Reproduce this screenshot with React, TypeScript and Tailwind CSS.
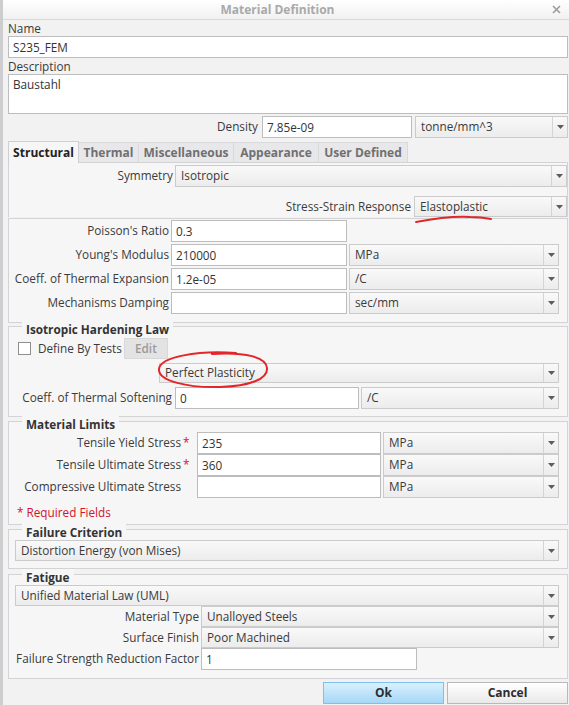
import type { ReactNode } from "react";

// combo box: grey gradient face with a separate arrow cell
function Combo({ value = "", className = "" }: { value?: string; className?: string }) {
    return (
        <div className={`flex h-full border border-[#cbcbcb] bg-linear-to-b from-[#f9f9f9] to-[#ececec] ${className}`}>
            <div className="flex-1 truncate pl-[5px] self-center text-[#3a3a3a]">{value}</div>
            <div className="flex w-[15px] items-center justify-center border-l border-[#d4d4d4]">
                <svg width="7" height="4" viewBox="0 0 7 4">
                    <path d="M0 0h7L3.5 4z" fill="#5c5c5c" />
                </svg>
            </div>
        </div>
    );
}

function Field({ value = "", className = "" }: { value?: string; className?: string }) {
    return (
        <input
            readOnly
            defaultValue={value}
            className={`h-full border border-[#bdbdbd] bg-white pl-[4px] text-[#333] outline-none ${className}`}
        />
    );
}

function Group({ title, className = "", children }: { title?: string; className?: string; children: ReactNode }) {
    return (
        <div className={`border border-[#d3d3d5] bg-[#f6f6f7] ${className}`}>
            {title && (
                <div className="-mt-[5px] h-[14px] pl-[13px] leading-[14px]">
                    <span className="bg-[#f6f6f7] px-[4px] font-bold text-[#333]">{title}</span>
                </div>
            )}
            {children}
        </div>
    );
}

const tabs = [
    { name: "Thermal", w: "w-[60px]" },
    { name: "Miscellaneous", w: "w-[95px]" },
    { name: "Appearance", w: "w-[85px]" },
    { name: "User Defined", w: "w-[89px]" },
];

const limits = [
    { label: "Tensile Yield Stress", value: "235", req: true },
    { label: "Tensile Ultimate Stress", value: "360", req: true },
    { label: "Compressive Ultimate Stress", value: "", req: false },
];

export default function App() {
    return (
        <div className="relative flex h-[705px] w-[569px] flex-col overflow-hidden border-l-[3px] border-[#cdcdd0] bg-[#f2f2f3] font-['Open_Sans',sans-serif] text-[11.75px] text-[#3b3b3b]">
            {/* title bar */}
            <div className="flex h-[20px] shrink-0 items-center border-b border-[#dadada] bg-linear-to-b from-white to-[#f1f1f1]">
                <span className="flex-1 text-center text-[12px] font-bold text-[#a9a9a9]">Material Definition</span>
                <svg width="9" height="9" viewBox="0 0 9 9" className="mr-[8px]">
                    <path d="M1 1l7 7M8 1L1 8" stroke="#9c9c9c" strokeWidth="1.6" />
                </svg>
            </div>

            <div className="flex flex-1 flex-col pl-[5px] pr-[1px]">
                <div className="h-[16px] leading-[16px]">Name</div>
                <div className="h-[22px]">
                    <Field value="S235_FEM" className="w-full" />
                </div>
                <div className="h-[16px] leading-[16px]">Description</div>
                <textarea
                    readOnly
                    defaultValue="Baustahl"
                    className="h-[40px] resize-none border border-[#bdbdbd] bg-white px-[4px] pt-[1px] leading-[16px] text-[#333] outline-none"
                />

                <div className="mt-[2px] flex h-[22px] items-center justify-end">
                    <span className="mr-[4px]">Density</span>
                    <Field value="7.85e-09" className="w-[150px]" />
                    <Combo value="tonne/mm^3" className="ml-[3px] w-[153px]" />
                </div>

                {/* tab strip */}
                <div className="mt-[3px] flex h-[22px] items-end border-b border-[#d3d3d5]">
                    <div className="-mb-px flex h-[22px] w-[71px] items-center justify-center border border-b-0 border-[#cfcfd1] bg-[#f6f6f7] text-[12px] font-bold text-[#222]">
                        Structural
                    </div>
                    {tabs.map((t) => (
                        <div
                            key={t.name}
                            className={`flex h-[20px] ${t.w} items-center justify-center border-t border-r border-[#dadadc] bg-[#e8e8ea] text-[12px] font-bold text-[#707070]`}
                        >
                            {t.name}
                        </div>
                    ))}
                </div>

                <div className="border-x border-[#d3d3d5] bg-[#f6f6f7] pt-[2px]">
                    <div className="flex h-[22px] items-center">
                        <div className="w-[164px] text-right">Symmetry</div>
                        <Combo value="Isotropic" className="ml-[2px] flex-1" />
                    </div>
                    <div className="mt-[9px] flex h-[21px] items-center justify-end">
                        <span className="mr-[3px]">Stress-Strain Response</span>
                        <Combo value="Elastoplastic" className="w-[153px]" />
                    </div>
                </div>

                <Group className="mt-[1px] flex flex-col gap-[2px] pt-[1px] pb-[8px]">
                    <div className="flex h-[22px] items-center pr-[8px]">
                        <div className="w-[160px] text-right">Poisson's Ratio</div>
                        <Field value="0.3" className="ml-[2px] w-[176px]" />
                    </div>
                    <div className="flex h-[22px] items-center pr-[8px]">
                        <div className="w-[160px] text-right">Young's Modulus</div>
                        <Field value="210000" className="ml-[2px] w-[176px]" />
                        <Combo value="MPa" className="ml-[2px] flex-1" />
                    </div>
                    <div className="flex h-[22px] items-center pr-[8px]">
                        <div className="w-[160px] text-right">Coeff. of Thermal Expansion</div>
                        <Field value="1.2e-05" className="ml-[2px] w-[176px]" />
                        <Combo value="/C" className="ml-[2px] flex-1" />
                    </div>
                    <div className="flex h-[22px] items-center pr-[8px]">
                        <div className="w-[160px] text-right">Mechanisms Damping</div>
                        <Field className="ml-[2px] w-[176px]" />
                        <Combo value="sec/mm" className="ml-[2px] flex-1" />
                    </div>
                </Group>

                <Group title="Isotropic Hardening Law" className="mt-[3px] pb-[7px]">
                    <div className="mt-[2px] flex h-[21px] items-center pl-[9px]">
                        <div className="h-[13px] w-[13px] border border-[#8e8e8e] bg-white" />
                        <span className="ml-[7px]">Define By Tests</span>
                        <div className="ml-[2px] flex h-[21px] w-[44px] items-center justify-center border border-[#d8d8d8] bg-[#e3e3e4] font-semibold text-[#9a9a9a]">
                            Edit
                        </div>
                    </div>
                    <div className="mt-[4px] h-[20px] pl-[150px] pr-[8px]">
                        <Combo value="Perfect Plasticity" />
                    </div>
                    <div className="mt-[4px] flex h-[22px] items-center pr-[8px]">
                        <div className="w-[163px] text-right">Coeff. of Thermal Softening</div>
                        <Field value="0" className="ml-[3px] w-[184px]" />
                        <Combo value="/C" className="ml-[2px] flex-1" />
                    </div>
                </Group>

                <Group title="Material Limits" className="mt-[4px] pb-[5px]">
                    <div className="mt-[1px] flex flex-col">
                        {limits.map((l) => (
                            <div key={l.label} className="flex h-[22px] items-center pr-[8px]">
                                <div className="w-[172px] text-right">{l.label}</div>
                                <div className="w-[14px] pl-[2px] text-[#d4122c]">{l.req ? "*" : ""}</div>
                                <Field value={l.value} className="ml-[2px] w-[184px]" />
                                <Combo value="MPa" className="ml-[2px] flex-1" />
                            </div>
                        ))}
                    </div>
                    <div className="mt-[7px] h-[14px] pl-[8px] leading-[14px] text-[#d4122c]">* Required Fields</div>
                </Group>

                <Group title="Failure Criterion" className="mt-[4px] pb-[7px]">
                    <div className="mt-[1px] h-[21px] pl-[6px] pr-[8px]">
                        <Combo value="Distortion Energy (von Mises)" />
                    </div>
                </Group>

                <Group title="Fatigue" className="mt-[5px] pb-[8px]">
                    <div className="mt-[1px] h-[21px] pl-[6px] pr-[8px]">
                        <Combo value="Unified Material Law (UML)" />
                    </div>
                    <div className="flex h-[21px] items-center pr-[8px]">
                        <div className="w-[190px] text-right">Material Type</div>
                        <Combo value="Unalloyed Steels" className="ml-[2px] flex-1" />
                    </div>
                    <div className="flex h-[21px] items-center pr-[8px]">
                        <div className="w-[190px] text-right">Surface Finish</div>
                        <Combo value="Poor Machined" className="ml-[2px] flex-1" />
                    </div>
                    <div className="flex h-[22px] items-center">
                        <div className="w-[190px] text-right">Failure Strength Reduction Factor</div>
                        <Field value="1" className="ml-[2px] w-[216px]" />
                    </div>
                </Group>

                <div className="mt-[3px] flex h-[22px] justify-end gap-[3px]">
                    <button className="w-[121px] border border-[#80bfe9] bg-linear-to-b from-[#d9f0fd] to-[#a5d7f6] text-[12px] font-bold text-[#2c2c2c]">
                        Ok
                    </button>
                    <button className="w-[121px] border border-[#b8b8b8] bg-linear-to-b from-white to-[#e9e9e9] text-[12px] font-bold text-[#2c2c2c]">
                        Cancel
                    </button>
                </div>
            </div>

            {/* red pen marks drawn over the form */}
            <svg
                className="pointer-events-none absolute top-0 -left-[3px]"
                width="569"
                height="705"
                viewBox="0 0 569 705"
                fill="none"
            >
                <path d="M416 222C432 219 452 216 470 217C479 217 486 218 491 219" stroke="#e1272b" strokeWidth="2" strokeLinecap="round" />
                <path
                    d="M236 353C198 350 160 357 159 369C158 381 188 388 220 387C250 386 268 379 267 368C266 357 246 352 212 354"
                    stroke="#e1272b"
                    strokeWidth="2"
                    strokeLinecap="round"
                />
            </svg>
        </div>
    );
}
